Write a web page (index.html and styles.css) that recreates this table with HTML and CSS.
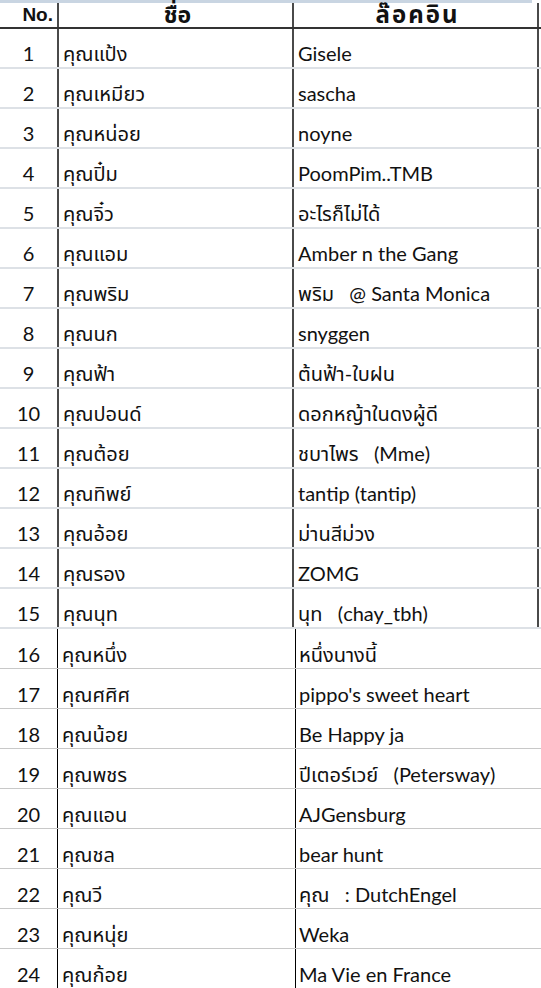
FILE: index.html
```html
<!DOCTYPE html>
<html lang="th">
<head>
<meta charset="utf-8">
<title>รายชื่อ</title>
<link rel="stylesheet" href="styles.css">
</head>
<body>
<div class="strip"></div>
<div class="top">
  <div class="row head">
    <div class="c1">No.</div>
    <div class="c2">ชื่อ</div>
    <div class="c3 wide">ล๊อคอิน</div>
  </div>
  <div class="row"><div class="c1">1</div><div class="c2">คุณแป้ง</div><div class="c3">Gisele</div></div>
  <div class="row"><div class="c1">2</div><div class="c2">คุณเหมียว</div><div class="c3">sascha</div></div>
  <div class="row"><div class="c1">3</div><div class="c2">คุณหน่อย</div><div class="c3">noyne</div></div>
  <div class="row"><div class="c1">4</div><div class="c2">คุณปิ๋ม</div><div class="c3">PoomPim..TMB</div></div>
  <div class="row"><div class="c1">5</div><div class="c2">คุณจิ๋ว</div><div class="c3">อะไรก็ไม่ได้</div></div>
  <div class="row"><div class="c1">6</div><div class="c2">คุณแอม</div><div class="c3">Amber n the Gang</div></div>
  <div class="row"><div class="c1">7</div><div class="c2">คุณพริม</div><div class="c3">พริม&nbsp;&nbsp;&nbsp;@ Santa Monica</div></div>
  <div class="row"><div class="c1">8</div><div class="c2">คุณนก</div><div class="c3">snyggen</div></div>
  <div class="row"><div class="c1">9</div><div class="c2">คุณฟ้า</div><div class="c3">ต้นฟ้า-ใบฝน</div></div>
  <div class="row"><div class="c1">10</div><div class="c2">คุณปอนด์</div><div class="c3">ดอกหญ้าในดงผู้ดี</div></div>
  <div class="row"><div class="c1">11</div><div class="c2">คุณต้อย</div><div class="c3">ชบาไพร&nbsp;&nbsp;&nbsp;(Mme)</div></div>
  <div class="row"><div class="c1">12</div><div class="c2">คุณทิพย์</div><div class="c3">tantip (tantip)</div></div>
  <div class="row"><div class="c1">13</div><div class="c2">คุณอ้อย</div><div class="c3">ม่านสีม่วง</div></div>
  <div class="row"><div class="c1">14</div><div class="c2">คุณรอง</div><div class="c3">ZOMG</div></div>
  <div class="row"><div class="c1">15</div><div class="c2">คุณนุท</div><div class="c3">นุท&nbsp;&nbsp;&nbsp;(chay_tbh)</div></div>
</div>
<div class="bottom">
  <div class="row"><div class="c1">16</div><div class="c2">คุณหนึ่ง</div><div class="c3">หนึ่งนางนี้</div></div>
  <div class="row"><div class="c1">17</div><div class="c2">คุณศศิศ</div><div class="c3">pippo's sweet heart</div></div>
  <div class="row"><div class="c1">18</div><div class="c2">คุณน้อย</div><div class="c3">Be Happy ja</div></div>
  <div class="row"><div class="c1">19</div><div class="c2">คุณพชร</div><div class="c3">ปีเตอร์เวย์&nbsp;&nbsp;&nbsp;(Petersway)</div></div>
  <div class="row"><div class="c1">20</div><div class="c2">คุณแอน</div><div class="c3">AJGensburg</div></div>
  <div class="row"><div class="c1">21</div><div class="c2">คุณชล</div><div class="c3">bear hunt</div></div>
  <div class="row"><div class="c1">22</div><div class="c2">คุณวี</div><div class="c3">คุณ&nbsp;&nbsp;&nbsp;: DutchEngel</div></div>
  <div class="row"><div class="c1">23</div><div class="c2">คุณหนุ่ย</div><div class="c3">Weka</div></div>
  <div class="row"><div class="c1">24</div><div class="c2">คุณก้อย</div><div class="c3">Ma Vie en France</div></div>
</div>
</body>
</html>
```
FILE: styles.css
```css
html, body {
  margin: 0;
  padding: 0;
  background: #ffffff;
}
body {
  width: 541px;
  height: 988px;
  overflow: hidden;
  font-family: Lato, "Noto Sans Thai", "Noto Sans", sans-serif;
  font-size: 20px;
  line-height: 22px;
  color: #111111;
}
.strip {
  height: 3px;
  width: 532px;
  background: #c9d5e2;
}
.row {
  display: grid;
  grid-template-columns: 57px 235px 247px;
  height: 40px;
}
.row > div {
  display: block;
  align-self: end;
  padding-bottom: 3px;
  box-sizing: border-box;
  white-space: pre;
  line-height: 22px;
}
.row > .c2, .row > .c3 {
  align-self: stretch;
  display: flex;
  align-items: flex-end;
}
.c1 {
  text-align: center;
}
.c2, .c3 {
  padding-left: 4px;
}
.top .row {
  border-bottom: 2px solid #dde1e6;
  height: 40px;
  box-sizing: border-box;
}
.top .c2, .top .c3 {
  border-left: 2px solid #4a4a4a;
}
.top .c3 {
  border-right: 2px solid #4a4a4a;
}
.top .row.head {
  height: 26px;
  border-bottom: 2px solid #333333;
  font-weight: 700;
  font-family: "Liberation Sans", "Noto Sans Thai", sans-serif;
  font-size: 23px;
}
.head > div {
  padding-bottom: 1px;
}
.head > .c1 {
  text-align: right;
  padding-right: 4px;
  font-size: 19px;
}
.head .c2, .head .c3 {
  justify-content: center;
}
.head .wide {
  letter-spacing: 2px;
  font-size: 24px;
}
.bottom .row {
  height: 40px;
  border-bottom: 1px solid #c8c8c8;
  box-sizing: border-box;
  grid-template-columns: 57px 238px 246px;
}
.bottom .c2, .bottom .c3 {
  border-left: 1px solid #000000;
}
.bottom .c3 {
  padding-left: 3px;
}
```
